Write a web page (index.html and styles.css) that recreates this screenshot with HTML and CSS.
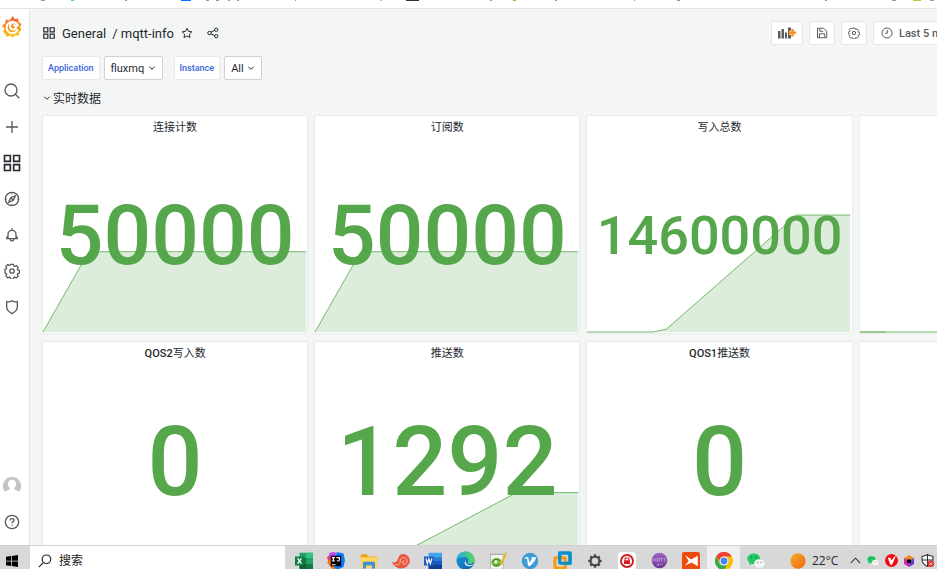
FILE: index.html
```html
<!DOCTYPE html>
<html lang="zh-CN">
<head>
<meta charset="utf-8">
<title>mqtt-info - Grafana</title>
<link rel="stylesheet" href="styles.css">
</head>
<body>
<svg width="0" height="0" class="defs" aria-hidden="true">
  <defs>
    <linearGradient id="g-logo" x1="0" y1="0" x2="0" y2="1"><stop offset="0" stop-color="#f05a28"/><stop offset="1" stop-color="#fbca0a"/></linearGradient>
    <linearGradient id="g-edge" x1="0" y1="0" x2="1" y2="1"><stop offset="0" stop-color="#1b9de2"/><stop offset="1" stop-color="#0c59a4"/></linearGradient>
    <linearGradient id="g-edge2" x1="0" y1="0" x2="1" y2="0"><stop offset="0" stop-color="#2aa9e0"/><stop offset="1" stop-color="#5bd75b"/></linearGradient>
    <linearGradient id="g-sun" x1="0" y1="0" x2="1" y2="1"><stop offset="0" stop-color="#f5ac2c"/><stop offset="1" stop-color="#ee6a10"/></linearGradient>
    <linearGradient id="g-violet" x1="0" y1="0" x2="0" y2="1"><stop offset="0" stop-color="#9c63c9"/><stop offset="1" stop-color="#6b3590"/></linearGradient>
    <symbol id="i-apps" viewBox="0 0 24 24"><path d="M3 3h7v7H3zM14 3h7v7h-7zM3 14h7v7H3zM14 14h7v7h-7z"/></symbol>
    <symbol id="i-cog" viewBox="0 0 24 24"><path d="M9.8 2.5h4.4l.7 2.7 1.4.6 2.4-1.4 3 3-1.4 2.4.6 1.4 2.6.7v.2 3.900l-2.600.7-.6 1.400 1.400 2.300-3 3-2.400-1.400-1.400.6-.7 2.600H9.800l-.7-2.600-1.400-.6-2.400 1.400-3-3 1.400-2.300-.6-1.400-2.100-.7V10.200l2.100-.6.6-1.400-1.400-2.400 3-3 2.400 1.400 1.400-.6z" transform="translate(.5 -.5) scale(.96 .98)"/><circle cx="12" cy="12" r="3.300"/></symbol>
    <symbol id="i-down" viewBox="0 0 24 24"><path d="M4 8l8 8 8-8"/></symbol>
    <symbol id="i-wechat" viewBox="0 0 24 24"><path fill="#22c768" d="M9 2C4 2 .5 5 .5 9c0 2.300 1.200 4.200 3 5.500L3 17.500l3.300-1.700c.9.200 1.800.3 2.700.3 5 0 8.500-3.100 8.500-7.100S14 2 9 2z"/><circle cx="6" cy="7" r="1" fill="#17713e"/><circle cx="12" cy="7" r="1" fill="#17713e"/><path fill="#f4f4f4" d="M16.500 9.500c-4 0-7 2.500-7 5.700s3 5.800 7 5.800c.8 0 1.500-.1 2.200-.3l2.500 1.300-.5-2.200c1.700-1 2.800-2.700 2.800-4.600 0-3.200-3-5.700-7-5.700z"/><circle cx="14.300" cy="14" r=".9" fill="#888"/><circle cx="18.800" cy="14" r=".9" fill="#888"/></symbol>
  </defs>
</svg>

<div class="bookmarks" aria-hidden="true">
  <svg width="937" height="2" viewBox="0 0 937 2">
    <g fill="#999"><path d="M41 0h4v1h-4zM125 0h2v1h-2zM206 0h3v1h-3zM216 0h3v1h-3zM228 0h2v1h-2zM237 0h2v1h-2zM295 0h1v1h-1zM490 0h2v1h-2zM555 0h2v1h-2zM634 0h1v1h-1zM677 0h3v1h-3zM825 0h2v1h-2zM892 0h4v1h-4zM930 0h4v1h-4z"/></g>
    <path fill="#63cfa8" d="M71 0h3v1h-3z"/><path fill="#0a6cff" d="M181 0h10v1h-10z"/><path fill="#e4a0ac" d="M380 0h2v1h-2z"/><path fill="#333" d="M406 0h13v1h-13z"/><path fill="#c8a050" d="M513 0h3v1h-3z"/><path fill="#b8cf38" d="M913 0h8v1h-8z"/>
  </svg>
</div>

<div class="app">
  <nav class="sidebar" aria-label="Main">
    <a class="side-link logo" href="#" aria-label="Home">
      <svg width="20" height="22" viewBox="0 0 40 44"><path fill="url(#g-logo)" d="M18 5l4-5 3 6 7-1 1 7 6 4-3 6 3 6-5 4 0 7-7-1-5 5-6-4-7 3-2-6-5-4 3-6-5-7 6-4 2-8 7 2z"/><path fill="none" stroke="#fff" stroke-width="4" stroke-linecap="round" d="M31 28a11.500 11.500 0 1 1 1-7c-.5-6-4.500-8-8-8-5 0-8 3-8 7s3 7 7 7c3 0 5-2 5-4.500s-2-4-4-4"/></svg>
    </a>
    <div class="side-main">
      <a class="side-link" href="#" aria-label="Search"><svg class="ic" width="16" height="16" viewBox="0 0 24 24"><circle cx="10.500" cy="10.500" r="9"/><path d="M17 17l6 6"/></svg></a>
      <a class="side-link" href="#" aria-label="Create"><svg class="ic" width="16" height="16" viewBox="0 0 24 24"><path d="M12 3v18M3 12h18"/></svg></a>
      <a class="side-link active" href="#" aria-label="Dashboards"><svg class="ic" width="20" height="20"><use href="#i-apps"/></svg></a>
      <a class="side-link" href="#" aria-label="Explore"><svg class="ic" width="16" height="16" viewBox="0 0 24 24"><circle cx="12" cy="12" r="10"/><path d="M17 7l-3 7-7 3 3-7zM10 10l4 4M12 2v2M12 20v2M2 12h2M20 12h2"/></svg></a>
      <a class="side-link" href="#" aria-label="Alerting"><svg class="ic" width="16" height="16" viewBox="0 0 24 24"><path d="M12 2v2.500M6 17v-6a6 6 0 0 1 12 0v6M6 13.500c-1.700.7-2 2-2 4h16c0-2-.3-3.300-2-4M9 18c.3 2 1.500 3 3 3s2.700-1 3-3"/></svg></a>
      <a class="side-link" href="#" aria-label="Configuration"><svg class="ic" width="16" height="16"><use href="#i-cog"/></svg></a>
      <a class="side-link" href="#" aria-label="Server admin"><svg class="ic" width="16" height="16" viewBox="0 0 24 24"><path d="M4 4c3 .8 5.500.3 8-1.500C14.500 4.300 17 4.800 20 4v8c0 4.500-3.500 7.500-8 10-4.500-2.500-8-5.500-8-10z"/></svg></a>
    </div>
    <a class="side-link" href="#" aria-label="Profile"><svg width="18" height="18" viewBox="0 0 24 24"><path fill="#c4c4c4" d="M12 0a12 12 0 0 0-9 20c1-2 3-2.500 5.500-3.500.7-.5.7-1.500 0-2.500C7 12.500 6.500 11 6.500 9c0-3 2-5.500 5.500-5.500S17.500 6 17.500 9c0 2-.5 3.500-2 5-.7 1-.7 2 0 2.500C18 17.500 20 18 21 20A12 12 0 0 0 12 0z"/></svg></a>
    <a class="side-link" href="#" aria-label="Help"><svg class="ic" width="16" height="16" viewBox="0 0 24 24"><circle cx="12" cy="12" r="10"/><path d="M9 9.500c.2-1.700 1.500-2.500 3-2.500s3 1 3 2.500c0 2-3 2-3 4.200M12 16v1.800"/></svg></a>
  </nav>

  <main class="dashboard">
    <header class="toolbar">
      <h1 class="crumbs">
        <svg class="ic dark" width="14" height="14"><use href="#i-apps"/></svg>
        <a href="#">General</a><span class="crumb-name">/ <a href="#">mqtt-info</a></span>
      </h1>
      <button class="plain" aria-label="Mark as favorite"><svg class="ic dark" width="12" height="12" viewBox="0 0 24 24"><path d="M12 2.500l3 6.200 6.700 1-4.900 4.700 1.200 6.700-6-3.200-6 3.200 1.200-6.700-4.900-4.700 6.700-1z"/></svg></button>
      <button class="plain" aria-label="Share dashboard"><svg class="ic dark" width="12" height="12" viewBox="0 0 24 24"><circle cx="5" cy="12" r="3.500"/><circle cx="18.500" cy="5.500" r="3.300"/><circle cx="18.500" cy="18.500" r="3.300"/><path d="M8 10.500l7.500-4M8 13.500l7.500 4"/></svg></button>
      <div class="actions">
        <button class="tool wide" aria-label="Add panel"><svg width="18" height="12" viewBox="0 0 36 24"><path fill="#5a5e63" d="M0 8h5v15H0zM7 4h5v19H7zM14 11h4v12h-4zM20 1h6v6h-3v9h3v7h-6z"/><path stroke="#ff8f1c" stroke-width="5" d="M29 4v15M21.500 11.500h15"/></svg></button>
        <button class="tool" aria-label="Save dashboard"><svg class="ic" width="12" height="12" viewBox="0 0 24 24"><path d="M3 2.500h12.500L21.500 8.500v13H3zM7.500 3v5.500h7M7 21v-7.500h10.500V21"/></svg></button>
        <button class="tool" aria-label="Dashboard settings"><svg class="ic" width="12" height="12"><use href="#i-cog"/></svg></button>
        <button class="tool time"><svg class="ic" width="12" height="12" viewBox="0 0 24 24"><circle cx="12" cy="12" r="10"/><path d="M12.500 6v6.500H8.500"/></svg>Last 5 minutes</button>
      </div>
    </header>

    <div class="variables">
      <div class="variable">
        <label for="v-app">Application</label>
        <span class="picker"><select id="v-app"><option>fluxmq</option></select><svg class="ic" width="8" height="8"><use href="#i-down"/></svg></span>
      </div>
      <div class="variable">
        <label for="v-inst">Instance</label>
        <span class="picker"><select id="v-inst"><option>All</option></select><svg class="ic" width="8" height="8"><use href="#i-down"/></svg></span>
      </div>
    </div>

    <button class="row-title"><svg class="ic dark" width="8" height="8"><use href="#i-down"/></svg>实时数据</button>

    <div class="panels">
      <section class="panel">
        <h2>连接计数</h2>
        <svg class="spark" viewBox="0 0 266 219" preserveAspectRatio="none"><path class="area" d="M0 218L46 137H265V218z"/><path class="line" d="M0 218L46 137H265"/></svg>
        <div class="value size-m">50000</div>
      </section>
      <section class="panel">
        <h2>订阅数</h2>
        <svg class="spark" viewBox="0 0 266 219" preserveAspectRatio="none"><path class="area" d="M0 218L46 137H265V218z"/><path class="line" d="M0 218L46 137H265"/></svg>
        <div class="value size-m">50000</div>
      </section>
      <section class="panel">
        <h2>写入总数</h2>
        <svg class="spark" viewBox="0 0 266 219" preserveAspectRatio="none"><path class="area" d="M67 218L80 215L211 100H265V218z"/><path class="line" d="M0 218H67L80 215L211 100H265"/></svg>
        <div class="value size-s">14600000</div>
      </section>
      <section class="panel">
        <svg class="spark" viewBox="0 0 266 219" preserveAspectRatio="none"><path class="line" d="M0 218H265M0 218H26"/></svg>
      </section>
      <section class="panel">
        <h2><b>QOS2</b>写入数</h2>
        <div class="value size-l">0</div>
      </section>
      <section class="panel">
        <h2>推送数</h2>
        <svg class="spark" viewBox="0 0 266 219" preserveAspectRatio="none"><path class="area" d="M78 218L203 152H265V218z"/><path class="line" d="M0 218H78L203 152H265"/></svg>
        <div class="value size-l">1292</div>
      </section>
      <section class="panel">
        <h2><b>QOS1</b>推送数</h2>
        <div class="value size-l">0</div>
      </section>
      <section class="panel"></section>
    </div>
  </main>
</div>

<footer class="taskbar">
  <button class="task start" aria-label="Start"><svg width="12" height="12" viewBox="0 0 24 24"><path d="M0 3.500L10 2v9.500H0zM11.500 1.800L24 0v11.500H11.500zM0 12.800h10V22L0 20.500zM11.500 12.800H24V24l-12.500-1.800z"/></svg></button>
  <label class="search"><svg width="14" height="14" viewBox="0 0 24 24" fill="none" stroke="#222" stroke-width="2"><circle cx="14.500" cy="9" r="7.300"/><path d="M9.500 14.500L1.500 22.500"/></svg><input type="text" placeholder="搜索" aria-label="搜索"></label>
  <div class="apps">
    <button class="task" aria-label="Excel"><svg width="18" height="18" viewBox="0 0 24 24"><path fill="#21a366" d="M6 1h18v22H6z"/><path fill="#33c481" d="M15 1h9v7h-9z"/><path fill="#107c41" d="M6 8h9v8H6zM15 16h9v7h-9z"/><path fill="#185c37" d="M6 16h9v7H6z"/><path fill="#107c41" d="M0 6h12v12H0z"/><path stroke="#fff" stroke-width="1.800" d="M3.500 8.500l5 7M8.500 8.500l-5 7"/></svg></button>
    <button class="task" aria-label="IntelliJ IDEA"><svg width="18" height="18" viewBox="0 0 24 24"><path fill="#fe315d" d="M0 7L8 0l8 5-3 17-9-3z"/><path fill="#f97a12" d="M0 14l7-7 6 14-5 3z"/><path fill="#087cfa" d="M13 0l9 2 2 9-2 9-9 4-4-5z"/><path fill="#b74af7" d="M3 1l8-1 2 8H3z"/><path d="M5 5h14v14H5z"/><path stroke="#fff" stroke-width="1.500" fill="none" d="M6.500 7.500h4M8.500 7.500v4.500M6.500 12h4M12.500 7.500h4v3c0 1.500-2 2-3.500 1M6.500 17h5"/></svg></button>
    <button class="task" aria-label="File Explorer"><svg width="18" height="18" viewBox="0 0 24 24"><path fill="#e8a317" d="M1 3h8l2 3h12v6H1z"/><path fill="#ffd45f" d="M1 7h22v14H1z"/><path fill="#3c91d8" d="M4 22v-7c0-1.500 1-2 2-2h12c1 0 2 .5 2 2v7h-4v-4H8v4z"/></svg></button>
    <button class="task" aria-label="Shell"><svg width="18" height="18" viewBox="0 0 24 24"><path fill="#e9573f" d="M0 13c3 2 6 1 8-4 1-5 5-7 9-6 4 1 7 5 7 9-1 6-6 10-12 10-5 0-10-3-12-9z"/><path fill="none" stroke="#ffc0ad" stroke-width="1.300" d="M4 17c6 1 7-2 7-5 0-4 3-5 6-4 4 1 4 6 1 8-3 1-5-1-4-3s3-1 3 0"/></svg></button>
    <button class="task" aria-label="Word"><svg width="18" height="18" viewBox="0 0 24 24"><path fill="#41a5ee" d="M6 1h18v7H6z"/><path fill="#2b7cd3" d="M6 7h18v6H6z"/><path fill="#185abd" d="M6 12h18v6H6z"/><path fill="#103f91" d="M6 17h18v6H6z"/><path fill="#185abd" d="M0 6h13v12H0z"/><path fill="none" stroke="#fff" stroke-width="1.600" d="M2.500 8.500l2 7 2-6.500 2 6.500 2-7"/></svg></button>
    <button class="task" aria-label="Edge"><svg width="19" height="19" viewBox="0 0 24 24"><circle cx="12" cy="12" r="11.500" fill="url(#g-edge)"/><path fill="url(#g-edge2)" d="M1 10C2 4 6 .5 12 .5c7 0 11.500 5 11.500 10 0 4-3 6-6 6-4 0-3-2-2-4 1-3-2-5-5-5-4 0-8 1-9.500 2.500z"/><path fill="#d9edf7" d="M13 11c-2 3 0 6 4 7 2 0 4-1 5.500-2-2 3-5 4-8 3-4-1-5-5-1.500-8z"/></svg></button>
    <button class="task" aria-label="Notepad++"><svg width="18" height="18" viewBox="0 0 24 24"><path fill="#f5f5ed" stroke="#a6a99c" d="M2 3h17v20H2z"/><path stroke="#777" stroke-dasharray="1 1" d="M2 3h17"/><ellipse cx="10" cy="14" rx="7" ry="6" fill="#7cc344"/><path fill="none" stroke="#2f6a25" stroke-width="1.200" d="M4 14c3-6 9-5 11-2M6 17c3 2 7 1 9-2"/><circle cx="9" cy="13" r="2" fill="#fff"/><path stroke="#e4b426" stroke-width="2.500" d="M23 1l-7 16"/></svg></button>
    <button class="task" aria-label="V client"><svg width="18" height="18" viewBox="0 0 24 24"><circle cx="12" cy="12" r="11" fill="#3d9bd5"/><path fill="#fff" d="M5 8c2-2 4-2 5 0l1 6c2-2 4-5 3-7h6c0 4-6 11-9 12-3 0-2-8-3-10-1-1-2 0-3 0z"/></svg></button>
    <button class="task" aria-label="VMware"><svg width="19" height="19" viewBox="0 0 24 24" fill="none" stroke-width="4"><rect x="8.500" y="2.500" width="13" height="13" rx="1" stroke="#0a8fc9"/><rect x="2.500" y="8.500" width="13" height="13" rx="1" stroke="#f59b19"/><path stroke="#0a8fc9" d="M8.500 12V2.500h13v13H13"/></svg></button>
    <button class="task" aria-label="Settings"><svg width="16" height="16" viewBox="0 0 24 24" fill="none" stroke="#444"><circle cx="12" cy="12" r="6.500" stroke-width="3"/><path stroke-width="3.500" d="M12 2v3M12 19v3M2 12h3M19 12h3M5 5l2.500 2.500M16.500 16.500L19 19M19 5l-2.500 2.500M7.500 16.500L5 19"/></svg></button>
    <button class="task" aria-label="Secure client"><svg width="18" height="18" viewBox="0 0 24 24"><rect width="24" height="24" rx="5" fill="#fff"/><circle cx="12" cy="12" r="8" fill="#fff" stroke="#d41920" stroke-width="2.500"/><path fill="#d41920" d="M8 11h8v5H8z"/><path fill="none" stroke="#d41920" stroke-width="1.500" d="M9.500 11V8h5v3"/></svg></button>
    <button class="task" aria-label="MQTT client"><svg width="17" height="17" viewBox="0 0 24 24"><circle cx="12" cy="12" r="11" fill="url(#g-violet)"/><path fill="none" stroke="#c39bdc" stroke-width="1.200" d="M3 14V9l2 3 2-3v5M9 9h3v4H9zM13 9h4M15 9v5M18 9h3M19.500 9v5M9 17h2v2H9zM13 17h3"/></svg></button>
    <button class="task" aria-label="Media"><svg width="18" height="18" viewBox="0 0 24 24"><rect width="24" height="24" rx="3" fill="#ed4a0b"/><path fill="#fff" d="M4 4l8 6 9-5v14l-8-5-9 4 5-6z"/></svg></button>
    <button class="task current" aria-label="Chrome"><svg width="18" height="18" viewBox="0 0 24 24"><circle cx="12" cy="12" r="12" fill="#fbbc05"/><path fill="#ea4335" d="M1.600 6A12 12 0 0 1 22.400 6H12L7 14z"/><path fill="#34a853" d="M1.600 6A12 12 0 0 0 12 24l5.200-9L12 17H7z"/><circle cx="12" cy="12" r="6" fill="#fff"/><circle cx="12" cy="12" r="4.600" fill="#4285f4"/></svg></button>
    <button class="task" aria-label="WeChat"><svg width="18" height="18"><use href="#i-wechat"/></svg></button>
  </div>
  <div class="tray">
    <button class="task weather"><svg width="16" height="16" viewBox="0 0 24 24"><circle cx="12" cy="12" r="11.500" fill="url(#g-sun)"/></svg>22°C</button>
    <button class="task" aria-label="Show hidden icons"><svg width="11" height="11" viewBox="0 0 24 24" fill="none" stroke="#333" stroke-width="2.500"><path d="M2 17L12 7l10 10"/></svg></button>
    <button class="task" aria-label="WeChat messages"><svg width="12" height="12"><use href="#i-wechat"/></svg></button>
    <button class="task" aria-label="Security"><svg width="13" height="13" viewBox="0 0 24 24"><circle cx="12" cy="12" r="12" fill="#f20a12"/><path fill="#fff" d="M5 7h5l2 5 6-8h2l-7 16h-3z"/></svg></button>
    <button class="task" aria-label="Toolbox"><svg width="12" height="12" viewBox="0 0 24 24"><path fill="#f28a22" d="M12 0l10 6-10 6L2 6z"/><path fill="#d727a7" d="M2 6l10 6v12L2 18z"/><path fill="#6939d8" d="M22 6l-10 6v12l10-6z"/><path d="M8 9h8v7H8z"/></svg></button>
    <button class="task" aria-label="Windows Security"><svg width="13" height="13" viewBox="0 0 24 24"><path fill="#fff" stroke="#333" stroke-width="2" d="M2 4c4 0 7-1 10-3 3 2 6 3 10 3v7c0 6-4 9-10 12C6 20 2 17 2 11z"/><path stroke="#333" stroke-width="2" d="M12 1v22M2 11h20"/><circle cx="18" cy="18" r="6" fill="#dc2c2c"/><path stroke="#fff" stroke-width="1.500" d="M15.500 15.500l5 5M20.500 15.500l-5 5"/></svg></button>
  </div>
</footer>
</body>
</html>
```
FILE: styles.css
```css
* { box-sizing: border-box; }

body {
  margin: 0;
  height: 100vh;
  display: flex;
  flex-direction: column;
  overflow: hidden;
  background: #f4f5f5;
  color: #24292e;
  font-family: Roboto, "Noto Sans CJK SC", sans-serif;
  font-size: 11px;
}

button, select, input { font: inherit; color: inherit; margin: 0; }
button { border: 0; padding: 0; background: none; }
a { color: inherit; text-decoration: none; }
svg { display: block; flex: none; }
.defs { position: absolute; }

.ic { fill: none; stroke: #565b60; stroke-width: 2; }
.ic.dark, .active .ic { stroke: #24292e; }

.bookmarks {
  flex: none;
  height: 9px;
  overflow: hidden;
  background: #fff;
  border-bottom: 1px solid #e2e3e3;
}

.app { flex: 1; min-height: 0; display: flex; }

.sidebar {
  flex: none;
  width: 30px;
  padding: 0 5px 5px 0;
  display: flex;
  flex-direction: column;
  background: #fff;
  border-right: 1px solid #e4e5e6;
}
.side-link {
  height: 36px;
  display: flex;
  align-items: center;
  justify-content: center;
}
.side-main { flex: 1; padding-top: 28px; }

.dashboard {
  flex: 1;
  min-width: 0;
  overflow: hidden;
  padding: 12px 0 0 12px;
}

.toolbar { display: flex; align-items: center; height: 24px; }
.crumbs {
  display: flex;
  align-items: center;
  gap: 6px;
  margin: 0;
  font-size: 14px;
  font-weight: 400;
}
.crumbs { font-size: 13px; }
.plain { margin-left: 7px; }
.plain + .plain { margin-left: 14px; }
.actions { display: flex; gap: 6px; margin-left: auto; width: 166px; }
.tool {
  flex: none;
  height: 24px;
  width: 26px;
  display: flex;
  align-items: center;
  justify-content: center;
  background: #fff;
  border: 1px solid #e6e8e8;
  border-radius: 2px;
}
.tool.wide { width: 32px; }
.tool.time {
  width: auto;
  gap: 6px;
  padding: 0 7px;
  font-weight: 500;
  color: #565b60;
  white-space: nowrap;
}

.variables { display: flex; gap: 11px; margin-top: 11px; }
.variable { display: flex; gap: 4px; }
.variable label {
  height: 24px;
  padding: 0 5px;
  line-height: 22px;
  background: #fff;
  border: 1px solid #e8eaea;
  border-radius: 2px;
  color: #3a66dc;
  font-size: 9px;
  font-weight: 500;
}
.picker { display: grid; align-items: center; }
.picker > * { grid-area: 1 / 1; }
.picker svg { justify-self: end; margin-right: 7px; pointer-events: none; }
.picker .ic { stroke: #24292e; stroke-width: 3; }
.picker select {
  appearance: none;
  height: 24px;
  padding: 0 17px 0 6px;
  background: #fff;
  border: 1px solid #cfd1d3;
  border-radius: 2px;
}

.row-title {
  display: flex;
  align-items: center;
  gap: 2px;
  height: 35px;
  padding-left: 1px;
  font-size: 12px;
}
.row-title .ic { stroke-width: 3; }

.panels {
  display: grid;
  grid-template-columns: repeat(4, minmax(0, 1fr));
  grid-auto-rows: 219px;
  gap: 7px 6px;
  width: 121%;
}
.panel {
  display: grid;
  grid-template-rows: 24px 1fr;
  background: #fff;
  border: 1px solid #e9ebeb;
  border-radius: 2px;
}
.panel h2 {
  grid-area: 1 / 1;
  margin: 0;
  text-align: center;
  font-size: 11px;
  font-weight: 400;
  line-height: 24px;
}
.panel h2 b { font-weight: 500; }
.spark { grid-area: 1 / 1 / 3 / 2; width: 100%; height: 100%; }
.area { fill: #56a64b; fill-opacity: 0.2; }
.line { fill: none; stroke: #73b969; stroke-width: 1; vector-effect: non-scaling-stroke; }
.value {
  grid-area: 2 / 1;
  align-self: center;
  text-align: center;
  color: #56a64b;
  font-weight: 500;
  line-height: 1.2;
}
.size-s { font-size: 54px; }
.size-m { font-size: 84px; }
.size-l { font-size: 97px; }

.taskbar {
  flex: none;
  height: 24px;
  overflow: hidden;
  display: flex;
  align-items: flex-start;
  background: #d8d8d8;
  border-top: 1px solid #cfcfcf;
}
.task {
  height: 29px;
  display: flex;
  align-items: center;
  justify-content: center;
}
.start { flex: none; width: 30px; padding-right: 6px; }
.search {
  flex: none;
  width: 255px;
  height: 29px;
  display: flex;
  align-items: center;
  gap: 7px;
  padding-left: 8px;
  background: #fff;
}
.search input {
  min-width: 0;
  flex: 1;
  padding: 0;
  border: 0;
  outline: 0;
  background: none;
  font-size: 12px;
}
.search input::placeholder { color: #222; opacity: 1; }
.apps {
  flex: 1;
  display: grid;
  grid-template-columns: repeat(15, 1fr);
  padding-left: 3px;
}
.current { background: #efefef; }
.tray { flex: none; width: 165px; display: flex; padding-left: 18px; }
.tray .task { flex: none; width: 18px; }
.tray .weather {
  width: 56px;
  gap: 6px;
  justify-content: flex-start;
  font-family: "Open Sans", sans-serif;
  font-size: 12px;
}
```
